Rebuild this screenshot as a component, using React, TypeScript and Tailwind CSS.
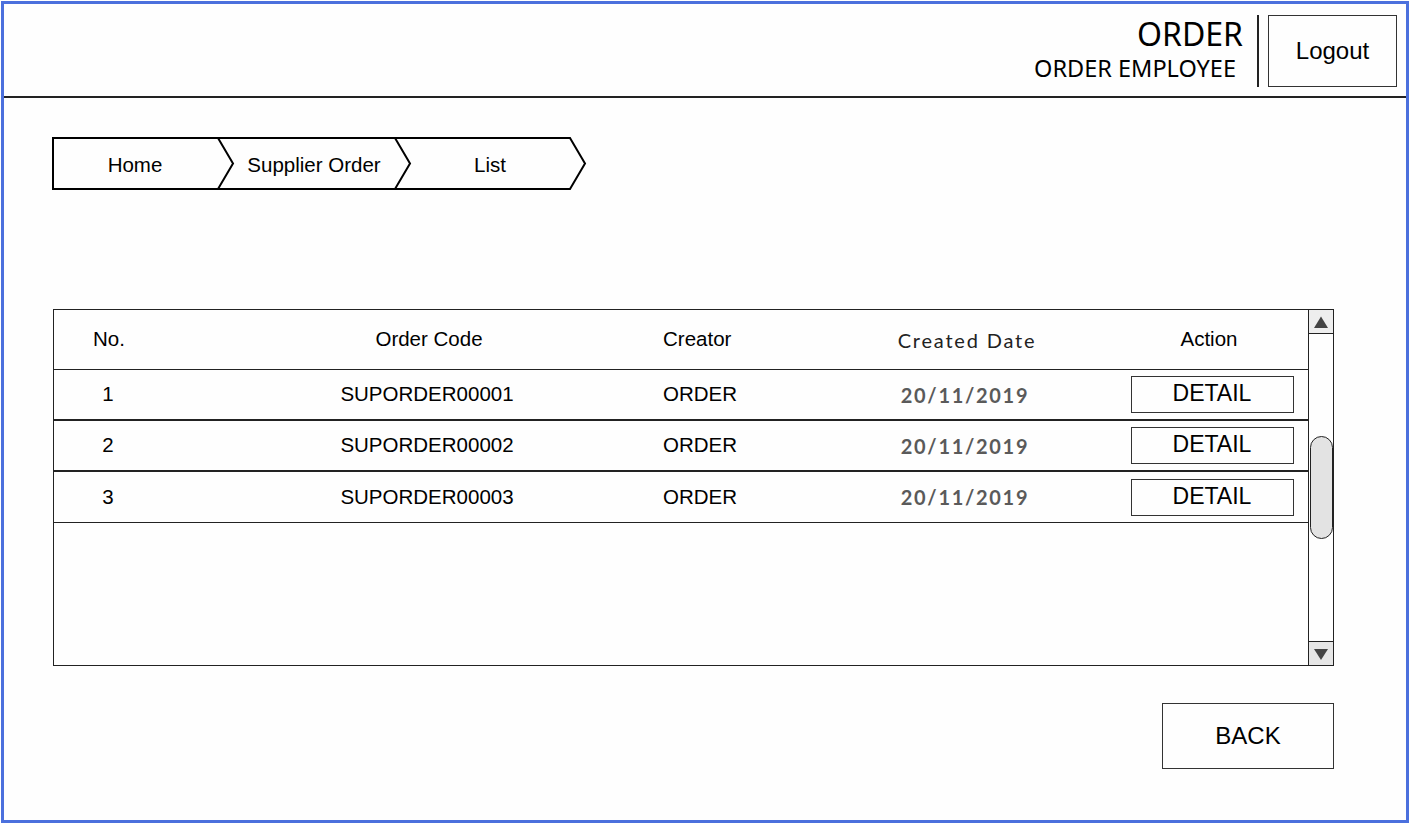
import React from "react";

const rows = [
  { no: 1, code: "SUPORDER00001", creator: "ORDER", date: "20/11/2019" },
  { no: 2, code: "SUPORDER00002", creator: "ORDER", date: "20/11/2019" },
  { no: 3, code: "SUPORDER00003", creator: "ORDER", date: "20/11/2019" },
];

const sans = "font-['Liberation_Sans',Arial,sans-serif]";

function Breadcrumb() {
  return (
    <div className="relative w-[536px] h-[53px]">
      <svg className="absolute inset-0" width="536" height="53" viewBox="0 0 536 53">
        <path
          d="M1 1 H518 L533 26.5 L518 52 H1 Z M166 1 L181 26.5 L166 52 M343 1 L358 26.5 L343 52"
          fill="none"
          stroke="#000"
          strokeWidth="2"
          strokeLinejoin="miter"
        />
      </svg>
      <div className={`relative flex h-full items-center pt-[3px] text-[20.5px] text-black ${sans}`}>
        <span className="w-[166px] text-center">Home</span>
        <span className="w-[177px] pl-[15px] text-center">Supplier Order</span>
        <span className="w-[175px] pl-[15px] text-center">List</span>
      </div>
    </div>
  );
}

function Scrollbar() {
  return (
    <div className="flex w-[25px] shrink-0 flex-col border-l border-[#222]">
      <div className="flex h-[24px] items-center justify-center border-b border-[#222] bg-[#eeeeee]">
        <svg width="14" height="12" viewBox="0 0 14 12">
          <path d="M7 0.5 L14 12 H0 Z" fill="#444" />
        </svg>
      </div>
      <div className="relative flex-1">
        <div className="absolute left-[1px] right-[0px] top-[102px] h-[103px] rounded-full border border-[#222] bg-[#e3e3e3]" />
      </div>
      <div className="flex h-[24px] items-center justify-center border-t border-[#222] bg-[#e6e6e6] pt-[1px]">
        <svg width="14" height="11" viewBox="0 0 14 11">
          <path d="M0 0 H14 L7 11 Z" fill="#444" />
        </svg>
      </div>
    </div>
  );
}

function OrderTable() {
  return (
    <div className="flex h-[357px] w-[1281px] border border-[#222]">
      <div className="min-w-0 flex-1">
        <div className={`flex h-[60px] items-center border-b border-[#222] text-[20.5px] text-black ${sans}`}>
          <div className="w-[110px] shrink-0 text-center">No.</div>
          <div className="ml-[165px] w-[200px] shrink-0 text-center">Order Code</div>
          <div className="ml-[134px] w-[140px] shrink-0 text-left">Creator</div>
          <div className="ml-[64px] w-[200px] shrink-0 text-center font-['Lato',sans-serif] text-[20px] tracking-[1.8px] text-[#222]">
            Created Date
          </div>
          <div className="ml-[56px] w-[180px] shrink-0 pr-[8px] text-center">Action</div>
        </div>
        {rows.map((r, i) => (
          <div
            key={r.no}
            className={`flex h-[51px] items-center text-[20.5px] text-black ${sans} ${
              i < 2 ? "border-b-2 border-[#222]" : "border-b border-[#222]"
            }`}
          >
            <div className="w-[108px] shrink-0 text-center">{r.no}</div>
            <div className="ml-[165px] w-[200px] shrink-0 text-center">{r.code}</div>
            <div className="ml-[136px] w-[140px] shrink-0 text-left">{r.creator}</div>
            <div className="ml-[62px] w-[200px] shrink-0 text-center font-['Lato',sans-serif] text-[20px] font-bold tracking-[1.7px] text-[#5a5a5a]">
              {r.date}
            </div>
            <div className="ml-[57px] flex w-[180px] shrink-0 justify-center">
              <button className="flex h-[37px] w-[163px] items-start justify-center border border-[#333] pt-[1px] text-[23px] leading-[30px] text-black">
                DETAIL
              </button>
            </div>
          </div>
        ))}
      </div>
      <Scrollbar />
    </div>
  );
}

export default function App() {
  return (
    <div className="h-[826px] w-[1410px] bg-white pl-[1px] pt-[1px]">
      <div className="flex h-[822px] w-[1408px] flex-col border-[3px] border-[#4b70dd] bg-[#fefefe]">
        <header className="flex h-[94px] items-start justify-end border-b-2 border-[#222] pr-[9px] pt-[11px]">
          <div className="mt-[3px] flex flex-col items-end font-['Noto_Sans',sans-serif] text-black">
            <span className="text-[32px] leading-[31px]">ORDER</span>
            <span className="mt-[8px] pr-[7px] text-[23.5px] leading-[23px]">ORDER EMPLOYEE</span>
          </div>
          <div className="ml-[14px] h-[72px] w-[2px] bg-[#222]" />
          <button
            className={`ml-[9px] flex h-[72px] w-[129px] items-center justify-center border border-[#333] text-[24px] text-black ${sans}`}
          >
            Logout
          </button>
        </header>
        <div className="ml-[48px] mt-[39px]">
          <Breadcrumb />
        </div>
        <div className="ml-[49px] mt-[119px]">
          <OrderTable />
        </div>
        <div className="mt-[37px] flex justify-end pr-[72px]">
          <button
            className={`flex h-[66px] w-[172px] items-center justify-center border border-[#333] text-[24px] text-black ${sans}`}
          >
            BACK
          </button>
        </div>
      </div>
    </div>
  );
}
